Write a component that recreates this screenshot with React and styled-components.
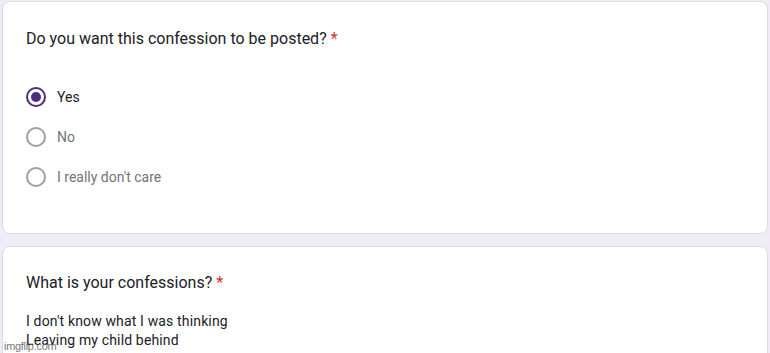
import React from "react";
import styled, { createGlobalStyle } from "styled-components";

const GlobalStyle = createGlobalStyle`
  html, body {
    margin: 0;
    background: #f0ebf8;
    font-family: Roboto, "Liberation Sans", Arial, sans-serif;
  }
`;

const Page = styled.div`
  display: flex;
  flex-direction: column;
  gap: 12px;
  padding: 1px 2px 0 2px;
  height: 353px;
  box-sizing: border-box;
  overflow: hidden;
  position: relative;
`;

const Card = styled.section`
  background: #fff;
  border: 1px solid #dadce0;
  border-radius: 8px;
  box-sizing: border-box;
  padding: ${(p) => p.$padTop}px 24px 0 23px;
  height: ${(p) => p.$height}px;
  flex-shrink: 0;
`;

const Title = styled.div`
  font-size: 16px;
  line-height: 24px;
  color: #202124;
`;

const Star = styled.span`
  color: #d93025;
  margin-left: 4px;
`;

const Options = styled.div`
  display: flex;
  flex-direction: column;
  gap: 20px;
  margin-top: ${(p) => p.$top}px;
`;

const Option = styled.label`
  display: flex;
  align-items: center;
  gap: 11px;
  height: 20px;
  font-size: 14px;
  color: ${(p) => (p.$checked ? "#202124" : "#70757a")};
`;

const Radio = styled.span`
  width: 20px;
  height: 20px;
  box-sizing: border-box;
  border-radius: 50%;
  border: 2px solid ${(p) => (p.$checked ? "#4c2a85" : "#9aa0a6")};
  display: flex;
  align-items: center;
  justify-content: center;
  flex-shrink: 0;

  &::after {
    content: "";
    display: ${(p) => (p.$checked ? "block" : "none")};
    width: 10px;
    height: 10px;
    border-radius: 50%;
    background: #4c2a85;
  }
`;

const Answer = styled.div`
  margin-top: 17px;
  font-size: 14px;
  line-height: 19px;
  letter-spacing: 0.15px;
  color: #202124;
`;

const Watermark = styled.div`
  position: absolute;
  left: 4px;
  bottom: 1px;
  font-family: "Liberation Sans", Arial, sans-serif;
  font-size: 11px;
  color: rgba(90, 90, 90, 0.85);
  letter-spacing: -0.3px;
`;

const choices = ["Yes", "No", "I really don't care"];

export default function App() {
  return (
    <>
      <GlobalStyle />
      <Page>
        <Card $padTop={25} $height={233}>
          <Title>
            Do you want this confession to be posted?<Star>*</Star>
          </Title>
          <Options $top={36}>
            {choices.map((c, i) => (
              <Option key={c} $checked={i === 0}>
                <Radio $checked={i === 0} />
                {c}
              </Option>
            ))}
          </Options>
        </Card>
        <Card $padTop={24} $height={120}>
          <Title>
            What is your confessions?<Star>*</Star>
          </Title>
          <Answer>
            I don't know what I was thinking
            <br />
            Leaving my child behind
          </Answer>
        </Card>
        <Watermark>imgflip.com</Watermark>
      </Page>
    </>
  );
}
